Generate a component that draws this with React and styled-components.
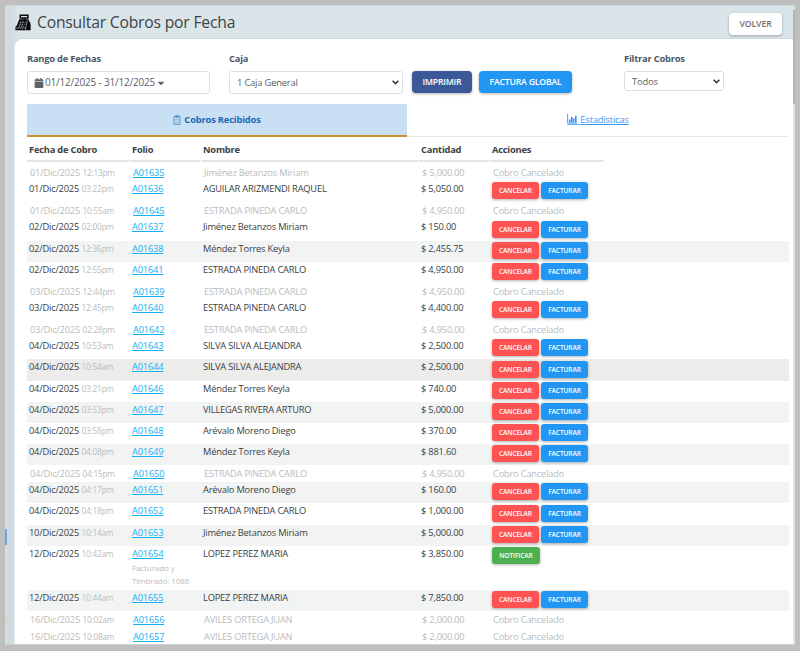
import React from 'react';
import styled, { createGlobalStyle, css } from 'styled-components';
import { FaCalendar, FaCaretDown } from 'react-icons/fa';


/* Data
   ========================================================================== */
// The rows without a status can be cancelled or invoiced
const cobros = [
  { fecha: '01/Dic/2025', hora: '12:13pm', folio: 'A01635', nombre: 'Jiménez Betanzos Miriam', cantidad: '5,000.00', estado: 'cancelado' },
  { fecha: '01/Dic/2025', hora: '03:22pm', folio: 'A01636', nombre: 'AGUILAR ARIZMENDI RAQUEL', cantidad: '5,050.00' },
  { fecha: '01/Dic/2025', hora: '10:55am', folio: 'A01645', nombre: 'ESTRADA PINEDA CARLO', cantidad: '4,950.00', estado: 'cancelado' },
  { fecha: '02/Dic/2025', hora: '02:00pm', folio: 'A01637', nombre: 'Jiménez Betanzos Miriam', cantidad: '150.00' },
  { fecha: '02/Dic/2025', hora: '12:36pm', folio: 'A01638', nombre: 'Méndez Torres Keyla', cantidad: '2,455.75', fondo: '#f2f4f4' },
  { fecha: '02/Dic/2025', hora: '12:55pm', folio: 'A01641', nombre: 'ESTRADA PINEDA CARLO', cantidad: '4,950.00' },
  { fecha: '03/Dic/2025', hora: '12:44pm', folio: 'A01639', nombre: 'ESTRADA PINEDA CARLO', cantidad: '4,950.00', estado: 'cancelado' },
  { fecha: '03/Dic/2025', hora: '12:45pm', folio: 'A01640', nombre: 'ESTRADA PINEDA CARLO', cantidad: '4,400.00' },
  { fecha: '03/Dic/2025', hora: '02:28pm', folio: 'A01642', nombre: 'ESTRADA PINEDA CARLO', cantidad: '4,950.00', estado: 'cancelado' },
  { fecha: '04/Dic/2025', hora: '10:53am', folio: 'A01643', nombre: 'SILVA SILVA ALEJANDRA', cantidad: '2,500.00' },
  { fecha: '04/Dic/2025', hora: '10:54am', folio: 'A01644', nombre: 'SILVA SILVA ALEJANDRA', cantidad: '2,500.00', fondo: '#ececeb' },
  { fecha: '04/Dic/2025', hora: '03:21pm', folio: 'A01646', nombre: 'Méndez Torres Keyla', cantidad: '740.00' },
  { fecha: '04/Dic/2025', hora: '03:53pm', folio: 'A01647', nombre: 'VILLEGAS RIVERA ARTURO', cantidad: '5,000.00', fondo: '#f2f4f4' },
  { fecha: '04/Dic/2025', hora: '03:58pm', folio: 'A01648', nombre: 'Arévalo Moreno Diego', cantidad: '370.00' },
  { fecha: '04/Dic/2025', hora: '04:08pm', folio: 'A01649', nombre: 'Méndez Torres Keyla', cantidad: '881.60', fondo: '#f2f4f4' },
  { fecha: '04/Dic/2025', hora: '04:15pm', folio: 'A01650', nombre: 'ESTRADA PINEDA CARLO', cantidad: '4,950.00', estado: 'cancelado' },
  { fecha: '04/Dic/2025', hora: '04:17pm', folio: 'A01651', nombre: 'Arévalo Moreno Diego', cantidad: '160.00', fondo: '#f2f4f4' },
  { fecha: '04/Dic/2025', hora: '04:18pm', folio: 'A01652', nombre: 'ESTRADA PINEDA CARLO', cantidad: '1,000.00' },
  { fecha: '10/Dic/2025', hora: '10:14am', folio: 'A01653', nombre: 'Jiménez Betanzos Miriam', cantidad: '5,000.00', fondo: '#f2f4f4' },
  { fecha: '12/Dic/2025', hora: '10:42am', folio: 'A01654', nombre: 'LOPEZ PEREZ MARIA', cantidad: '3,850.00', estado: 'facturado', nota: 'Facturado y Timbrado: 1086' },
  { fecha: '12/Dic/2025', hora: '10:44am', folio: 'A01655', nombre: 'LOPEZ PEREZ MARIA', cantidad: '7,850.00', fondo: '#f2f4f4' },
  { fecha: '16/Dic/2025', hora: '10:02am', folio: 'A01656', nombre: 'AVILES ORTEGA JUAN', cantidad: '2,000.00', estado: 'cancelado', alto: 16.2 },
  { fecha: '16/Dic/2025', hora: '10:08am', folio: 'A01657', nombre: 'AVILES ORTEGA JUAN', cantidad: '2,000.00', estado: 'cancelado', alto: 16.2 },
];


/* Page
   ========================================================================== */
const GlobalStyle = createGlobalStyle`
  * {
    box-sizing: border-box;
  }

  body {
    margin: 0;
    background: #bfbfbf;
    font-family: 'Open Sans', 'Noto Sans', sans-serif;
    letter-spacing: -0.2px;
    color: #3c4043;
  }
`;

const Page = styled.div`
  height: 651px;
  padding: 5px 5px 6px;
  overflow: hidden;
`;

const Screen = styled.div`
  height: 640px;
  display: flex;
  background: #dae5ea;
  border-top: 1px solid #cfd6d9;
  border-bottom: 1px solid #d0d0d0;
  overflow: hidden;
`;

// Thin sliver of the side menu that stays visible on the left
const Rail = styled.div`
  width: 2px;
  flex: none;
  background: linear-gradient(#d6dee2 0 523px, #6ea6e4 523px 539px, #d6dee2 539px 604px, #d3dccb 604px 620px, #d6dee2 620px);
`;

const Main = styled.main`
  flex: 1;
  min-width: 0;
  display: flex;
  flex-direction: column;
  padding-left: 7px;
  background: linear-gradient(90deg, #cfdbe0 0, #d2dde2 7px, #dae5ea 10px);
`;

const Scrollbar = styled.div`
  width: 2px;
  flex: none;
  background: linear-gradient(#dae5ea 0 4px, #b3b3b3 4px 98px, #e4e4e4 98px);
`;

const Header = styled.header`
  height: 32px;
  flex: none;
  display: flex;
  align-items: flex-start;
  justify-content: space-between;
  padding-right: 11px;
`;

const Title = styled.h1`
  margin: 0;
  padding: 4px 0 0 1px;
  display: flex;
  align-items: center;
  gap: 6px;
  font-size: 15.7px;
  line-height: 24px;
  font-weight: 400;
  color: #3d4347;
`;

const Card = styled.section`
  flex: 1;
  min-height: 0;
  padding: 14px 4px 0 12px;
  background: #fff;
  border-top: 1px solid #cbd7dc;
  border-left: 1px solid #e3e9ec;
  border-top-left-radius: 9px;
  overflow: hidden;
`;


/* Filters
   ========================================================================== */
const Filters = styled.div`
  height: 51px;
  display: flex;
`;

const Field = styled.div`
  width: ${(props) => props.$width}px;
  margin-right: ${(props) => props.$gap || 0}px;
`;

const Label = styled.div`
  height: 18px;
  font-size: 9.3px;
  line-height: 12px;
  font-weight: 700;
  color: #4a5763;
`;

const Select = styled.div`
  height: ${(props) => props.$height || 23}px;
  display: flex;
  align-items: center;
  padding: 0 3px 0 ${(props) => props.$indent || 7}px;
  border: 1px solid #dcdfe0;
  border-radius: 3px;
  background: #fff;
  font-size: 9.4px;
  color: #5c6165;
  white-space: nowrap;

  .chevron {
    margin-left: auto;
  }
`;

const DateText = styled.span`
  margin: 0 1px 0 1px;
  padding-bottom: 1px;
  font-size: 10px;
`;

const Button = styled.button`
  height: 22px;
  padding: 0;
  width: ${(props) => props.$width}px;
  border: none;
  border-radius: 4px;
  background: ${(props) => props.$color};
  color: #fff;
  font-family: inherit;
  font-size: 8.7px;
  font-weight: 600;
  letter-spacing: -0.2px;
  white-space: nowrap;
  box-shadow: 0 1px 3px rgba(0, 0, 0, 0.3);
  cursor: pointer;

  /* Button on the title bar */
  ${(props) => props.$plain && css`
    margin-top: 7px;
    background: #fff;
    color: #707070;
    letter-spacing: -0.1px;
  `}
`;

const ButtonGroup = styled.div`
  display: flex;
  gap: 7px;
  margin-top: 18px;
  margin-right: 52px;
`;


/* Tabs
   ========================================================================== */
const Tabs = styled.nav`
  height: 33px;
  display: grid;
  grid-template-columns: 380px 1fr;
  border-bottom: 1px solid #e6e8e9;
`;

const Tab = styled.a`
  height: 33px;
  display: flex;
  align-items: center;
  justify-content: center;
  padding-bottom: 2px;
  font-size: 9.4px;
  color: #3d97f5;
  text-decoration: underline;

  ${(props) => props.$active && css`
    gap: 3px;
    padding-bottom: 0;
    background: #c9dff3;
    border-bottom: 2px solid #cc9130;
    color: #1c69b5;
    font-weight: 700;
    text-decoration: none;
  `}
`;


/* Table
   ========================================================================== */
const columns = '103px 71px 218px 71px 1fr';

const TableHead = styled.div`
  width: 578px;
  height: 27px;
  padding-top: 2px;
  display: grid;
  grid-template-columns: ${columns};
`;

const HeadCell = styled.div`
  margin-right: 1.5px;
  padding: 4px 0 0 2px;
  height: 23px;
  border-bottom: 2px solid #e3e4e4;
  font-size: 9.3px;
  line-height: 14px;
  font-weight: 700;
`;

const Row = styled.div`
  height: ${(props) => props.$height}px;
  display: grid;
  grid-template-columns: ${columns};
  background: ${(props) => props.$background || 'transparent'};
  font-size: 9.3px;
  line-height: 14px;
  color: ${(props) => (props.$muted ? '#b9bcbe' : '#3a3e41')};
`;

const Cell = styled.div`
  padding: ${(props) => (props.$muted ? '2px 0 0 3px' : '1px 0 0 2px')};
  white-space: nowrap;
`;

const Time = styled.span`
  margin-left: 2.5px;
  font-size: 8.2px;
  color: #b9bcbe;
`;

const Folio = styled.a`
  color: #16b0f4;
  text-decoration: underline;
`;

const Note = styled.div`
  width: 60px;
  font-size: 8px;
  line-height: 13.3px;
  letter-spacing: -0.1px;
  white-space: normal;
  color: #b9bcbe;
`;

const Actions = styled.div`
  display: flex;
  gap: 2px;
  padding: 1.2px 0 0 2px;
`;

const ActionButton = styled.button`
  width: ${(props) => props.$width || 47}px;
  height: 17px;
  padding: 0;
  border: none;
  border-radius: 3px;
  background: ${(props) => props.$color};
  color: #fff;
  font-family: inherit;
  font-size: 6.6px;
  font-weight: 600;
  letter-spacing: -0.1px;
  box-shadow: 0 1px 3px rgba(0, 0, 0, 0.3);
  cursor: pointer;
`;


/* Icons
   ========================================================================== */
const RegisterIcon = () => (
  <svg width="16" height="17" viewBox="0 0 16 17">
    <path fill="none" stroke="#080808" strokeWidth="1.5" d="M5.3 1.3h7.6v2.6H5.3zM9.3 4v2" />
    <path fill="#080808" d="M4.2 5.2h9l2.4 4.6v6.4H.4v-3.4l1.6-1.6z" />
    <path stroke="#dae5ea" strokeWidth=".9" strokeDasharray="1.4 1" d="M5 8.2h5.4M4.3 10.2h5.4M3.6 12.2h5.4" />
    <path stroke="#dae5ea" strokeWidth=".6" fill="none" d="M12.3 6.5l-1.5 6.3v3M.5 14h9.8" />
  </svg>
);

const ClipboardIcon = () => (
  <svg width="8" height="10" viewBox="0 0 8 10" fill="none" stroke="#4d8fcd" strokeWidth=".9">
    <path d="M1 1.4h6v8H1z" />
    <path d="M2.7.6h2.6v1.7H2.7z" />
    <path strokeWidth=".4" d="M2.3 4.4h3.4M2.3 6h3.4M2.3 7.6h3.4" />
  </svg>
);

// The bottom line joins the underline of the tab's text
const ChartIcon = () => (
  <svg width="13" height="11" viewBox="0 0 13 11">
    <path fill="none" stroke="#3d97f5" strokeWidth=".9" d="M.6 0v9H10M.2 10.4H13" />
    <path fill="#3d97f5" d="M1.9 5.4h1.7v3H1.9zM4 3h1.7v5.4H4zM6.1 4.6h1.5v3.8H6.1zM8 1.8h1.6v6.6H8z" />
  </svg>
);

const Chevron = () => (
  <svg className="chevron" width="7" height="5" viewBox="0 0 7 5">
    <path fill="none" stroke="#2b2f32" strokeWidth="1.5" d="M.6.8l2.9 2.9L6.4.8" />
  </svg>
);


const rowHeight = (estado) => {
  if (estado === 'cancelado') return 17.15;
  if (estado === 'facturado') return 44.6;
  return 21.15;
};

const RowActions = ({ estado }) => {
  if (estado === 'cancelado') return <Cell $muted>Cobro Cancelado</Cell>;
  if (estado === 'facturado') {
    return (
      <Actions>
        <ActionButton $color="#4caf50" $width={48}>NOTIFICAR</ActionButton>
      </Actions>
    );
  }
  return (
    <Actions>
      <ActionButton $color="#ff5252">CANCELAR</ActionButton>
      <ActionButton $color="#2196f3">FACTURAR</ActionButton>
    </Actions>
  );
};

const CobroRow = ({ cobro }) => {
  const muted = cobro.estado === 'cancelado';

  return (
    <Row $height={cobro.alto || rowHeight(cobro.estado)} $background={cobro.fondo} $muted={muted}>
      <Cell $muted={muted}>{cobro.fecha}<Time>{cobro.hora}</Time></Cell>
      <Cell $muted={muted}>
        <Folio>{cobro.folio}</Folio>
        {cobro.nota && <Note>{cobro.nota}</Note>}
      </Cell>
      <Cell $muted={muted}>{cobro.nombre}</Cell>
      <Cell $muted={muted}>$ {cobro.cantidad}</Cell>
      <RowActions estado={cobro.estado} />
    </Row>
  );
};

export default function App() {
  return (
    <Page>
      <GlobalStyle />
      <Screen>
        <Rail />
        <Main>
          <Header>
            <Title><RegisterIcon />Consultar Cobros por Fecha</Title>
            <Button $plain $width={53}>VOLVER</Button>
          </Header>
          <Card>
            <Filters>
              <Field $width={183} $gap={19}>
                <Label>Rango de Fechas</Label>
                <Select $indent={6}>
                  <FaCalendar size={10} />
                  <DateText>01/12/2025 - 31/12/2025</DateText>
                  <FaCaretDown size={10} />
                </Select>
              </Field>
              <Field $width={174} $gap={9}>
                <Label>Caja</Label>
                <Select>1 Caja General<Chevron /></Select>
              </Field>
              <ButtonGroup>
                <Button $color="#3b5998" $width={60}>IMPRIMIR</Button>
                <Button $color="#2196f3" $width={93}>FACTURA GLOBAL</Button>
              </ButtonGroup>
              <Field $width={100}>
                <Label>Filtrar Cobros</Label>
                <Select $height={20}>Todos<Chevron /></Select>
              </Field>
            </Filters>
            <Tabs>
              <Tab $active><ClipboardIcon />Cobros Recibidos</Tab>
              <Tab><ChartIcon />Estadísticas</Tab>
            </Tabs>
            <TableHead>
              <HeadCell>Fecha de Cobro</HeadCell>
              <HeadCell>Folio</HeadCell>
              <HeadCell>Nombre</HeadCell>
              <HeadCell>Cantidad</HeadCell>
              <HeadCell>Acciones</HeadCell>
            </TableHead>
            {cobros.map((cobro) => <CobroRow key={cobro.folio} cobro={cobro} />)}
          </Card>
        </Main>
        <Scrollbar />
      </Screen>
    </Page>
  );
}
